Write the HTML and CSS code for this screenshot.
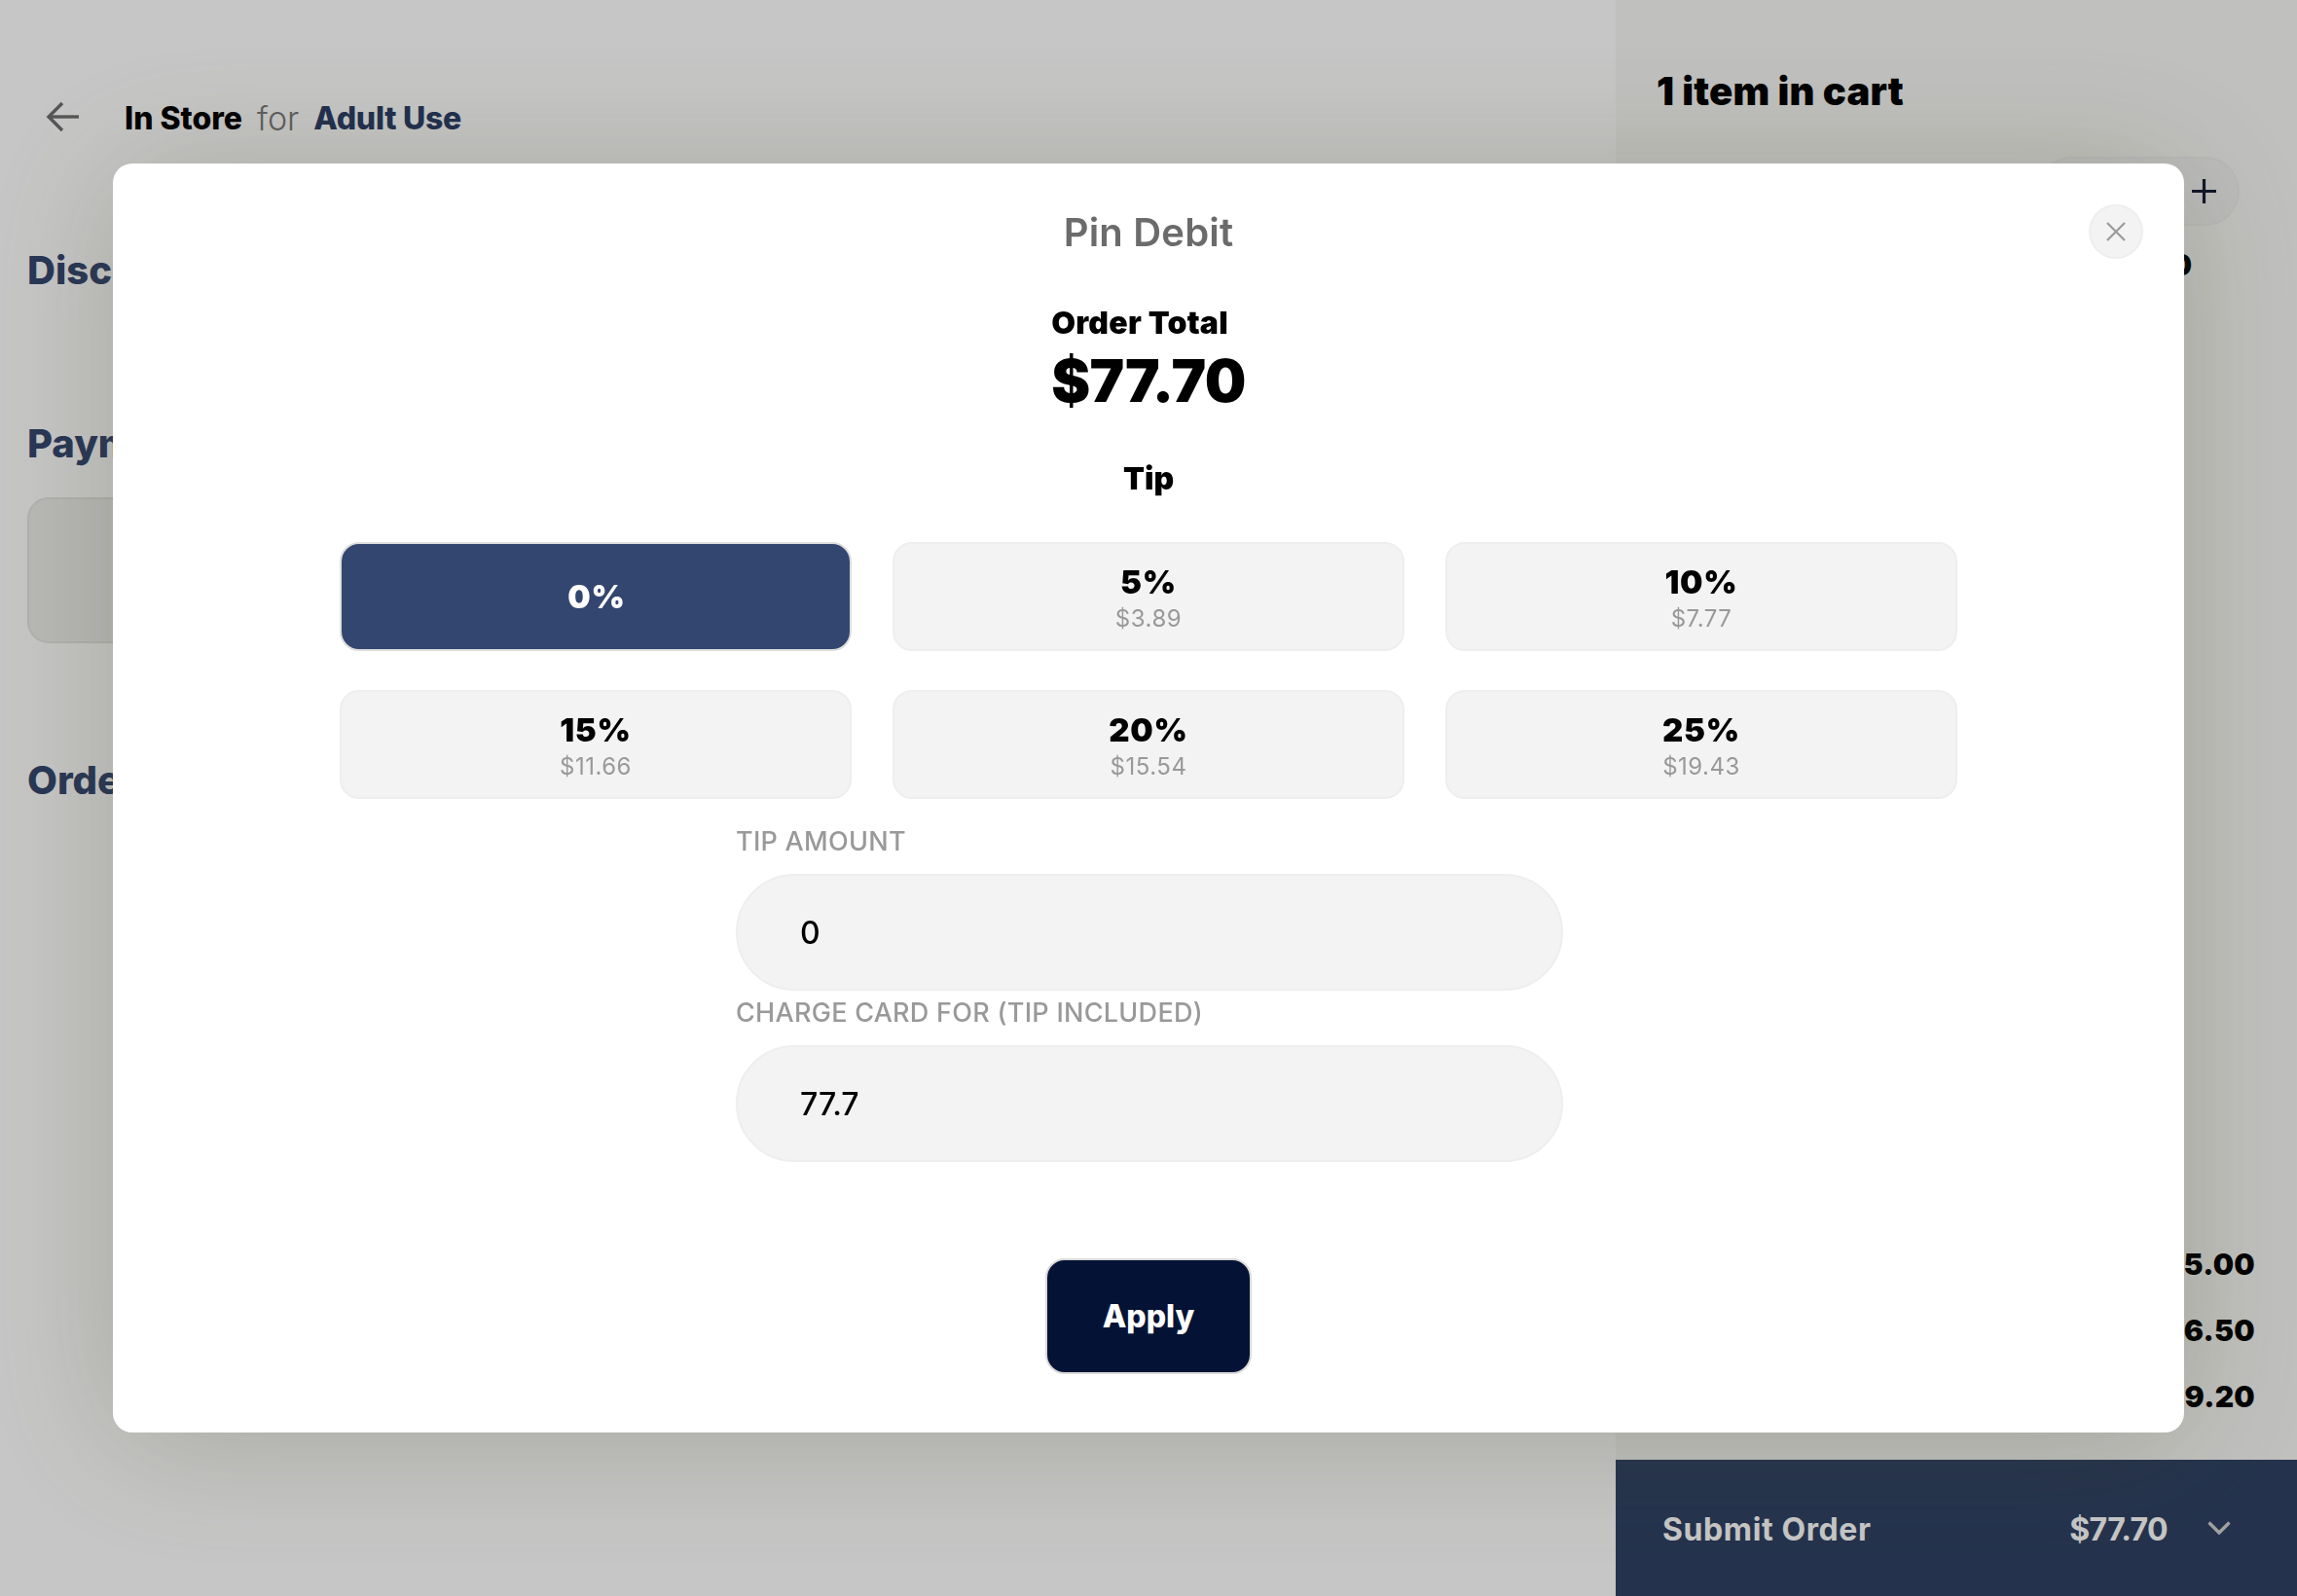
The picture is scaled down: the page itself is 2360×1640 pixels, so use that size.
FILE: index.html
```html
<!DOCTYPE html>
<html lang="en">
<head>
<meta charset="utf-8">
<title>Pin Debit</title>
<link rel="stylesheet" href="styles.css">
</head>
<body>
<div class="app">
  <main class="main">
    <header class="topbar">
      <svg class="back" viewBox="0 0 34 32" width="34" height="32" fill="none" stroke="#6f6f6f" stroke-width="3.4"><path d="M34 16H3"/><path d="M17 2 3 16l14 14"/></svg>
      <span class="store">In Store</span>
      <span class="for">for</span>
      <span class="use">Adult Use</span>
    </header>
    <h2 class="sect sect-disc">Discounts</h2>
    <h2 class="sect sect-pay">Payment</h2>
    <div class="pay-card"></div>
    <h2 class="sect sect-order">Order</h2>
  </main>
  <aside class="cart">
    <h1 class="cart-title">1 item in cart</h1>
    <div class="stepper">
      <svg class="plus" viewBox="0 0 25 25" width="25" height="25" fill="none" stroke="#141c36" stroke-width="3.2"><path d="M12.5 0v25M0 12.5h25"/></svg>
    </div>
    <div class="item-price">$70.00</div>
    <div class="summary">
      <div class="sum-row"><span>Subtotal</span><b>$75.00</b></div>
      <div class="sum-row"><span>Discounts</span><b>-$6.50</b></div>
      <div class="sum-row"><span>Taxes</span><b>$9.20</b></div>
    </div>
    <div class="submit">
      <span class="submit-label">Submit Order</span>
      <span class="submit-total">$77.70</span>
      <svg class="chev" viewBox="0 0 24 14" width="24" height="14" fill="none" stroke="#d0d0d0" stroke-width="3.4"><path d="M1.5 1.5 12 12 22.5 1.5"/></svg>
    </div>
  </aside>
</div>
<div class="overlay">
  <section class="modal">
    <button class="close" aria-label="Close">
      <svg viewBox="0 0 20 20" width="20" height="20" fill="none" stroke="#9a9a9a" stroke-width="2.2"><path d="M1 1l18 18M19 1 1 19"/></svg>
    </button>
    <h2 class="modal-title">Pin Debit</h2>
    <div class="total">
      <div class="total-label">Order Total</div>
      <div class="total-value">$77.70</div>
    </div>
    <div class="tip-title">Tip</div>
    <div class="tips">
      <button class="tip tip-on"><span class="pct">0%</span></button>
      <button class="tip"><span class="pct">5%</span><span class="amt">$3.89</span></button>
      <button class="tip"><span class="pct">10%</span><span class="amt">$7.77</span></button>
      <button class="tip"><span class="pct">15%</span><span class="amt">$11.66</span></button>
      <button class="tip"><span class="pct">20%</span><span class="amt">$15.54</span></button>
      <button class="tip"><span class="pct">25%</span><span class="amt">$19.43</span></button>
    </div>
    <div class="fields">
      <label class="label label-first">TIP AMOUNT</label>
      <input class="input" value="0">
      <label class="label">CHARGE CARD FOR (TIP INCLUDED)</label>
      <input class="input" value="77.7">
    </div>
    <button class="apply">Apply</button>
  </section>
</div>
</body>
</html>
```

FILE: styles.css
```css
* { box-sizing: border-box; }
html, body { margin: 0; padding: 0; height: 1640px; overflow: hidden; background: #fff; }
body { font-family: "Inter", "Liberation Sans", sans-serif; color: #000; }
button { font-family: inherit; cursor: pointer; }

.app { display: flex; width: 2360px; height: 1640px; }

.main { width: 1660px; padding: 96px 0 0 28px; background: #fff; }
.topbar { display: flex; align-items: center; height: 50px; padding-left: 19px; }
.back { flex: none; margin: -2px 47px 0 0; }
.store { font-size: 32px; font-weight: 800; color: #000; letter-spacing: 0; }
.for { font-size: 34px; font-weight: 300; color: #7a7a7a; margin-left: 15px; }
.use { font-size: 32px; font-weight: 800; color: #2a3c66; margin-left: 15px; letter-spacing: -0.25px; }

.sect { margin: 0; font-size: 40px; line-height: 48px; font-weight: 800; color: #33466f; }
.sect-disc { margin-top: 108px; }
.sect-pay { margin-top: 130px; }
.sect-order { margin-top: 117px; }
.pay-card { width: 400px; height: 150px; margin-top: 31px; border: 2px solid #e4e4e2; border-radius: 22px; background: #eeeeec; }

.cart { display: flex; flex-direction: column; width: 700px; height: 1640px; padding-top: 64px; background: #f8f8f6; }
.cart-title { margin: 0 0 0 42px; font-size: 40px; line-height: 60px; font-weight: 900; letter-spacing: 0.15px; }
.stepper { display: flex; align-items: center; justify-content: flex-end; align-self: flex-end; width: 208px; height: 71px; margin: 37px 59px 0 0; padding-right: 22px; border: 2px solid #eee; border-radius: 36px; background: #f2f2f2; }
.item-price { align-self: flex-end; margin: 22px 108px 0 0; font-size: 30px; line-height: 36px; font-weight: 900; }
.summary { margin-top: auto; padding: 31px 43px; }
.sum-row { display: flex; justify-content: space-between; align-items: center; height: 68px; font-size: 30px; }
.sum-row b { font-weight: 900; letter-spacing: 0.3px; }
.submit { display: flex; align-items: center; height: 140px; padding: 2px 68px 0 48px; background: #2f4164; color: #fff; font-size: 32px; font-weight: 700; }
.submit-label { letter-spacing: 0.6px; }
.submit-total { margin-left: auto; margin-right: 41px; letter-spacing: -0.6px; }
.chev { margin-top: -2px; }

.overlay { position: fixed; inset: 0; display: flex; align-items: center; justify-content: center; background: rgba(0, 0, 0, 0.224); }
.modal { position: relative; display: flex; flex-direction: column; align-items: center; width: 2128px; height: 1304px; padding-top: 43px; background: #fff; border-radius: 20px; box-shadow: 0 8px 140px rgba(70, 75, 40, 0.26); }
.close { position: absolute; top: 42px; right: 42px; display: flex; align-items: center; justify-content: center; width: 56px; height: 56px; padding: 0; border: 2px solid #eee; border-radius: 50%; background: #f3f3f3; }
.modal-title { margin: 0; font-size: 40px; line-height: 56px; font-weight: 600; letter-spacing: 0.2px; color: #6b6b6b; }
.total { margin-top: 45px; }
.total-label { font-size: 32px; line-height: 40px; font-weight: 900; letter-spacing: 0.25px; }
.total-value { margin-top: 3px; font-size: 60px; line-height: 72px; font-weight: 900; letter-spacing: -0.5px; }
.tip-title { margin-top: 45px; font-size: 32px; line-height: 40px; font-weight: 900; }
.tips { display: grid; grid-template-columns: repeat(3, 526px); grid-auto-rows: 112px; gap: 40px 42px; margin-top: 45px; }
.tip { display: flex; flex-direction: column; align-items: center; justify-content: center; padding: 5px 0 0; border: 2px solid #eee; border-radius: 20px; background: #f3f3f3; color: #000; }
.tip-on { padding: 0 0 0 2px; background: #33466f; border-color: #dedede; color: #fff; }
.pct { font-size: 33px; line-height: 38px; font-weight: 900; letter-spacing: 0.8px; }
.amt { margin-top: 3px; font-size: 24px; line-height: 32px; font-weight: 400; letter-spacing: 0.5px; color: #999; }

.fields { display: flex; flex-direction: column; width: 850px; margin-left: 2px; }
.label { margin-top: 7px; margin-bottom: 17px; font-size: 27px; line-height: 32px; font-weight: 500; letter-spacing: 0.28px; color: #999; }
.label-first { margin-top: 28px; }
.input { width: 100%; height: 120px; padding: 0 64px; border: 2px solid #eee; border-radius: 60px; background: #f3f3f3; font-family: inherit; font-size: 32px; font-weight: 500; color: #000; outline: none; }

.apply { width: 212px; height: 119px; margin-top: 99px; padding: 0; border: 2px solid #d9d9d9; border-radius: 20px; background: #041335; color: #fff; font-size: 32px; font-weight: 800; }
```
